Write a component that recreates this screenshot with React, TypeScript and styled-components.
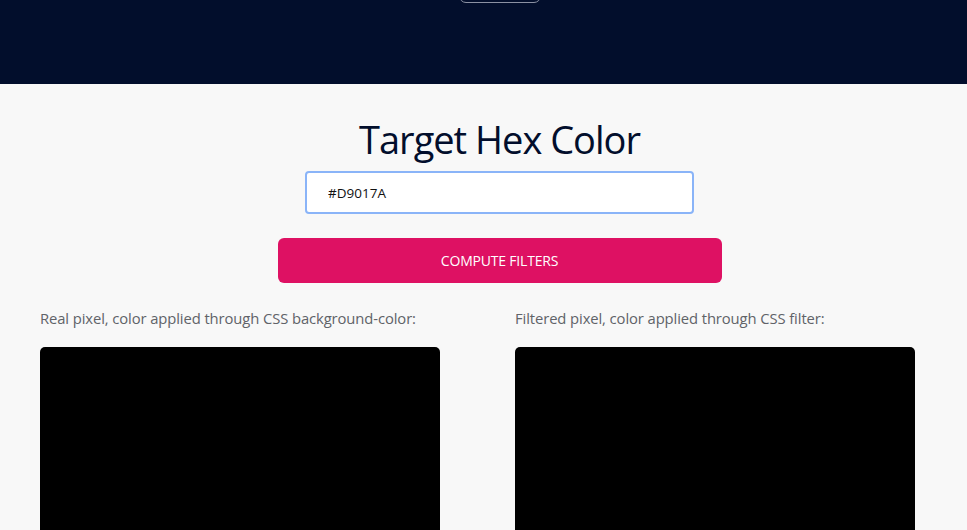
import React from "react";
import styled, { createGlobalStyle } from "styled-components";

const Global = createGlobalStyle`
  html, body { margin: 0; padding: 0; background: #f8f8f8; }
  body { font-family: "Open Sans", "Liberation Sans", sans-serif; overflow: hidden; }
`;

const Page = styled.div`
  width: 999px;
`;

const Header = styled.header`
  height: 84px;
  background: #020e2c;
  display: flex;
  justify-content: center;
  align-items: flex-start;
  overflow: hidden;
`;

const HeaderButton = styled.div`
  width: 82px;
  height: 30px;
  margin-top: -27px;
  border: 1.5px solid #8b91a3;
  border-radius: 7px;
  box-sizing: border-box;
`;

const Main = styled.main`
  display: flex;
  flex-direction: column;
  align-items: center;
  padding-top: 32px;
`;

const Title = styled.h1`
  margin: 0;
  font-family: "Open Sans", sans-serif;
  font-weight: 400;
  font-size: 38px;
  letter-spacing: -1px;
  line-height: 46px;
  color: #020e2c;
`;

const HexInput = styled.input`
  margin-top: 9px;
  width: 389px;
  height: 43px;
  box-sizing: border-box;
  border: 2px solid #8ab4f8;
  border-radius: 4px;
  background: #fff;
  padding: 0 0 0 21px;
  font-family: "Open Sans", sans-serif;
  font-size: 13.5px;
  color: #111;
  outline: none;
`;

const ComputeButton = styled.button`
  margin-top: 24px;
  width: 444px;
  height: 45px;
  border: none;
  border-radius: 6px;
  background: #de1163;
  color: #fff;
  font-family: "Open Sans", sans-serif;
  font-size: 14px;
  letter-spacing: -0.2px;
  cursor: pointer;
`;

const Columns = styled.section`
  align-self: stretch;
  display: grid;
  grid-template-columns: 475px 475px;
  padding-left: 40px;
  margin-top: 25px;
`;

const Column = styled.div`
  display: flex;
  flex-direction: column;
`;

const Label = styled.p`
  margin: 0;
  font-family: "Open Sans", sans-serif;
  font-size: 14.8px;
  line-height: 20px;
  color: #606368;
  letter-spacing: -0.1px;
`;

const Pixel = styled.div<{ $color: string }>`
  margin-top: 19px;
  width: 400px;
  height: 240px;
  border-radius: 5px;
  background: ${(p) => p.$color};
`;

export default function App() {
  return (
    <Page>
      <Global />
      <Header>
        <HeaderButton />
      </Header>
      <Main>
        <Title>Target Hex Color</Title>
        <HexInput defaultValue="#D9017A" autoFocus />
        <ComputeButton>COMPUTE FILTERS</ComputeButton>
        <Columns>
          <Column>
            <Label>Real pixel, color applied through CSS background-color:</Label>
            <Pixel $color="#000" />
          </Column>
          <Column>
            <Label>Filtered pixel, color applied through CSS filter:</Label>
            <Pixel $color="#000" />
          </Column>
        </Columns>
      </Main>
    </Page>
  );
}
